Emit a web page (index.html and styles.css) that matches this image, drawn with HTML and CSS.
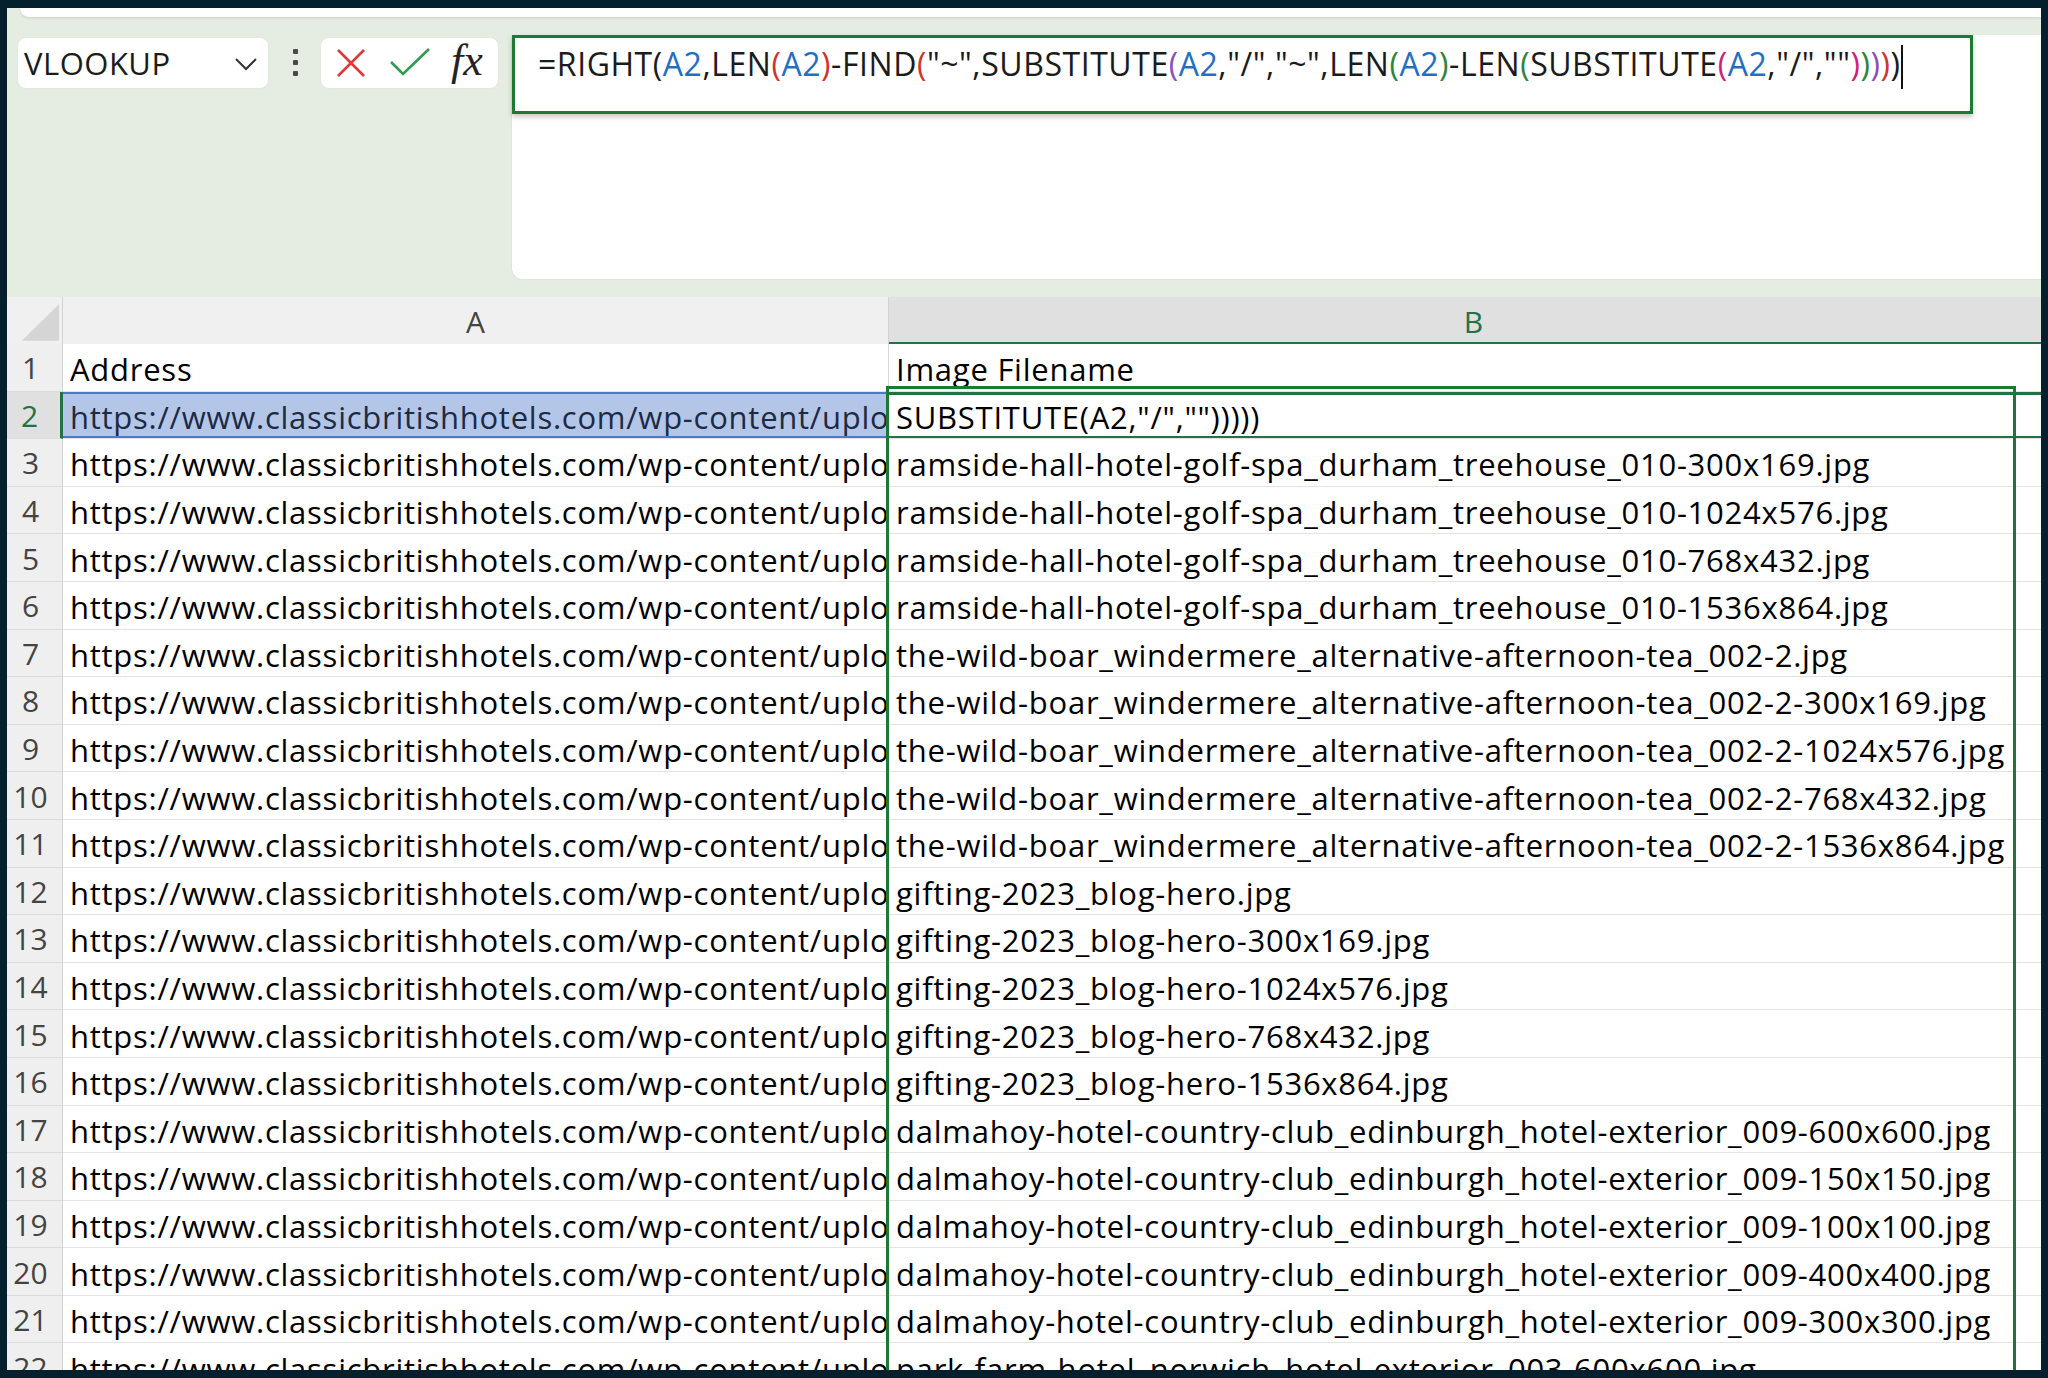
FILE: index.html
```html
<!DOCTYPE html>
<html lang="en">
<head>
<meta charset="utf-8">
<title>Excel - Image Filename</title>
<link rel="stylesheet" href="styles.css">
</head>
<body>
<div class="frame">
  <div class="app">
    <div class="ribbon-edge"></div>
    <div class="formula-row">
      <div class="namebox">
        <span class="namebox-text">VLOOKUP</span>
        <svg class="chev" width="22" height="14" viewBox="0 0 22 14"><path d="M1 2 L11 12 L21 2" fill="none" stroke="#333" stroke-width="2"/></svg>
      </div>
      <div class="vdots"><i></i><i></i><i></i></div>
      <div class="btnbox">
        <svg class="ic-x" width="30" height="30" viewBox="0 0 30 30"><path d="M2 2 L28 28 M28 2 L2 28" stroke="#e0393b" stroke-width="2.6" fill="none"/></svg>
        <svg class="ic-ok" width="40" height="30" viewBox="0 0 40 30"><path d="M1 14 L13 26 L39 1" stroke="#2e9c4c" stroke-width="2.6" fill="none"/></svg>
        <span class="fx">fx</span>
      </div>
      <div class="formula-panel">
        <div class="formula-box"><span class="k">=RIGHT(</span><span class="ref">A2</span>,LEN<span class="p1">(</span><span class="ref">A2</span><span class="p1">)</span>-FIND<span class="p1">(</span>"~",SUBSTITUTE<span class="p2">(</span><span class="ref">A2</span>,"/","~",LEN<span class="p3">(</span><span class="ref">A2</span><span class="p3">)</span>-LEN<span class="p3">(</span>SUBSTITUTE<span class="p4">(</span><span class="ref">A2</span>,"/",""<span class="p4">)</span><span class="p3">)</span><span class="p2">)</span><span class="p1">)</span>)<span class="caret"></span></div>
      </div>
    </div>

    <div class="sheet">
      <div class="row head">
        <div class="rh corner"><svg width="56" height="47" viewBox="0 0 56 47"><path d="M15 44 L53 44 L53 7 Z" fill="#d5d5d5"/></svg></div>
        <div class="ch">A</div>
        <div class="ch active">B</div>
      </div>
      <div class="row"><div class="rh">1</div><div class="c a">Address</div><div class="c b">Image Filename</div></div>
      <div class="row"><div class="rh cur">2</div><div class="c a sel">https://www.classicbritishhotels.com/wp-content/uploads/</div><div class="c b edit">SUBSTITUTE(A2,"/","")))))</div></div>
      <div class="row"><div class="rh">3</div><div class="c a">https://www.classicbritishhotels.com/wp-content/uploads/</div><div class="c b">ramside-hall-hotel-golf-spa_durham_treehouse_010-300x169.jpg</div></div>
      <div class="row"><div class="rh">4</div><div class="c a">https://www.classicbritishhotels.com/wp-content/uploads/</div><div class="c b">ramside-hall-hotel-golf-spa_durham_treehouse_010-1024x576.jpg</div></div>
      <div class="row"><div class="rh">5</div><div class="c a">https://www.classicbritishhotels.com/wp-content/uploads/</div><div class="c b">ramside-hall-hotel-golf-spa_durham_treehouse_010-768x432.jpg</div></div>
      <div class="row"><div class="rh">6</div><div class="c a">https://www.classicbritishhotels.com/wp-content/uploads/</div><div class="c b">ramside-hall-hotel-golf-spa_durham_treehouse_010-1536x864.jpg</div></div>
      <div class="row"><div class="rh">7</div><div class="c a">https://www.classicbritishhotels.com/wp-content/uploads/</div><div class="c b">the-wild-boar_windermere_alternative-afternoon-tea_002-2.jpg</div></div>
      <div class="row"><div class="rh">8</div><div class="c a">https://www.classicbritishhotels.com/wp-content/uploads/</div><div class="c b">the-wild-boar_windermere_alternative-afternoon-tea_002-2-300x169.jpg</div></div>
      <div class="row"><div class="rh">9</div><div class="c a">https://www.classicbritishhotels.com/wp-content/uploads/</div><div class="c b">the-wild-boar_windermere_alternative-afternoon-tea_002-2-1024x576.jpg</div></div>
      <div class="row"><div class="rh">10</div><div class="c a">https://www.classicbritishhotels.com/wp-content/uploads/</div><div class="c b">the-wild-boar_windermere_alternative-afternoon-tea_002-2-768x432.jpg</div></div>
      <div class="row"><div class="rh">11</div><div class="c a">https://www.classicbritishhotels.com/wp-content/uploads/</div><div class="c b">the-wild-boar_windermere_alternative-afternoon-tea_002-2-1536x864.jpg</div></div>
      <div class="row"><div class="rh">12</div><div class="c a">https://www.classicbritishhotels.com/wp-content/uploads/</div><div class="c b">gifting-2023_blog-hero.jpg</div></div>
      <div class="row"><div class="rh">13</div><div class="c a">https://www.classicbritishhotels.com/wp-content/uploads/</div><div class="c b">gifting-2023_blog-hero-300x169.jpg</div></div>
      <div class="row"><div class="rh">14</div><div class="c a">https://www.classicbritishhotels.com/wp-content/uploads/</div><div class="c b">gifting-2023_blog-hero-1024x576.jpg</div></div>
      <div class="row"><div class="rh">15</div><div class="c a">https://www.classicbritishhotels.com/wp-content/uploads/</div><div class="c b">gifting-2023_blog-hero-768x432.jpg</div></div>
      <div class="row"><div class="rh">16</div><div class="c a">https://www.classicbritishhotels.com/wp-content/uploads/</div><div class="c b">gifting-2023_blog-hero-1536x864.jpg</div></div>
      <div class="row"><div class="rh">17</div><div class="c a">https://www.classicbritishhotels.com/wp-content/uploads/</div><div class="c b">dalmahoy-hotel-country-club_edinburgh_hotel-exterior_009-600x600.jpg</div></div>
      <div class="row"><div class="rh">18</div><div class="c a">https://www.classicbritishhotels.com/wp-content/uploads/</div><div class="c b">dalmahoy-hotel-country-club_edinburgh_hotel-exterior_009-150x150.jpg</div></div>
      <div class="row"><div class="rh">19</div><div class="c a">https://www.classicbritishhotels.com/wp-content/uploads/</div><div class="c b">dalmahoy-hotel-country-club_edinburgh_hotel-exterior_009-100x100.jpg</div></div>
      <div class="row"><div class="rh">20</div><div class="c a">https://www.classicbritishhotels.com/wp-content/uploads/</div><div class="c b">dalmahoy-hotel-country-club_edinburgh_hotel-exterior_009-400x400.jpg</div></div>
      <div class="row"><div class="rh">21</div><div class="c a">https://www.classicbritishhotels.com/wp-content/uploads/</div><div class="c b">dalmahoy-hotel-country-club_edinburgh_hotel-exterior_009-300x300.jpg</div></div>
      <div class="row"><div class="rh">22</div><div class="c a">https://www.classicbritishhotels.com/wp-content/uploads/</div><div class="c b">park-farm-hotel_norwich_hotel-exterior_003-600x600.jpg</div></div>
      <div class="range-box"></div>
    </div>
  </div>
</div>
</body>
</html>
```

FILE: styles.css
```css
* { box-sizing: border-box; }
html, body { margin: 0; padding: 0; }
body {
  background: #041f2e;
  font-family: "Open Sans", "Noto Sans", sans-serif;
  width: 2048px;
  height: 1378px;
  overflow: hidden;
}
.frame {
  padding: 8px 7px 8px 7px;
  height: 1378px;
}
.app {
  width: 2034px;
  height: 1362px;
  background: #e5ede2;
  overflow: hidden;
  position: relative;
}
.ribbon-edge {
  height: 9px;
  margin-left: 13px;
  background: #ffffff;
  border-bottom-left-radius: 10px;
  box-shadow: 0 1px 3px rgba(0,0,0,0.12);
}
.formula-row {
  display: flex;
  align-items: flex-start;
  margin-top: 18px;
  padding-left: 10px;
  height: 245px;
}
.namebox {
  margin-top: 2px;
  width: 252px;
  height: 52px;
  background: #fff;
  border-radius: 9px;
  border: 1px solid #e3e8e0;
  display: flex;
  align-items: center;
  justify-content: space-between;
  padding: 0 11px 0 6px;
}
.namebox-text {
  font-size: 31px;
  color: #1b1b1b;
  letter-spacing: 0.5px;
}
.chev { margin-top: 2px; }
.vdots {
  margin: 14px 0 0 24px;
  width: 5px;
  display: flex;
  flex-direction: column;
  gap: 6px;
}
.vdots i {
  display: block;
  width: 5px;
  height: 5px;
  border-radius: 1px;
  background: #4a4a4a;
}
.btnbox {
  margin: 2px 0 0 22px;
  width: 179px;
  height: 52px;
  background: #fff;
  border-radius: 9px;
  border: 1px solid #e3e8e0;
  display: flex;
  align-items: center;
  padding-left: 15px;
}
.ic-x { margin-right: 24px; }
.ic-ok { margin-right: 21px; }
.fx {
  font-family: "Liberation Serif", "DejaVu Serif", serif;
  font-style: italic;
  font-size: 44px;
  color: #222;
  line-height: 1;
  margin-top: -4px;
  letter-spacing: 0px;
}
.formula-panel {
  margin-left: 12px;
  flex: 1;
  height: 245px;
  background: #fff;
  border-bottom-left-radius: 12px;
  border-left: 1px solid #dfe5dc;
  border-bottom: 1px solid #dfe5dc;
}
.formula-box {
  width: 1461px;
  height: 79px;
  border: 3px solid #1d7a35;
  box-shadow: 0 3px 5px rgba(0,0,0,0.22);
  padding: 4px 0 0 23px;
  font-size: 32px;
  color: #1b1b1b;
  white-space: nowrap;
  letter-spacing: 0.55px;
  display: flex;
  align-items: flex-start;
}
.formula-box .ref { color: #1f6fc5; }
.formula-box .p1 { color: #d0342c; }
.formula-box .p2 { color: #8a4fc4; }
.formula-box .p3 { color: #2e8540; }
.formula-box .p4 { color: #cf1f7a; }
.caret {
  display: inline-block;
  width: 2px;
  height: 44px;
  background: #111;
  margin: 3px 0 0 1px;
}

.sheet {
  margin-top: 17px;
  position: relative;
}
.row {
  display: grid;
  grid-template-columns: 56px 826px 1170px;
  height: 47.6px;
}
.row.head { height: 47px; }
.rh {
  background: #efefef;
  border-right: 1px solid #d3d3d3;
  border-bottom: 1px solid #dcdcdc;
  font-size: 30px;
  color: #444;
  display: flex;
  align-items: center;
  justify-content: center;
  padding-right: 8px;
  padding-top: 2px;
  line-height: 1;
}
.rh.corner { padding: 0; background: #f0f0f0; border-bottom: 1px solid #cfcfcf; }
.rh.cur {
  background: #e0e0e0;
  color: #217346;
  border-right: 3px solid #217346;
}
.ch {
  background: #f0f0f0;
  border-right: 1px solid #d3d3d3;
  border-bottom: 1px solid #cfcfcf;
  font-size: 30px;
  color: #444;
  display: flex;
  align-items: center;
  justify-content: center;
  line-height: 1;
  padding-top: 3px;
}
.ch.active {
  background: #e0e0e0;
  color: #217346;
  border-bottom: 3px solid #217346;
  padding-top: 5px;
}
.c {
  background: #fff;
  border-bottom: 1px solid #e3e3e3;
  font-size: 31px;
  letter-spacing: 0.75px;
  color: #000;
  white-space: nowrap;
  overflow: hidden;
  padding-left: 7px;
  display: flex;
  align-items: center;
  line-height: 1;
  padding-top: 5px;
}
.c.a { border-right: 1px solid #d6d6d6; }
.c.sel {
  background: #b3c6e8;
  color: #1c2a44;
  box-shadow: inset 0 2px 0 #4f79c6, inset 0 -2px 0 #4f79c6;
}
.c.edit {
  box-shadow: inset 0 3px 0 #217346, inset 0 -2px 0 #217346;
}
.range-box {
  position: absolute;
  left: 879px;
  top: 89px;
  width: 1130px;
  height: 1100px;
  border: 3px solid #1a7a33;
  pointer-events: none;
}
```
